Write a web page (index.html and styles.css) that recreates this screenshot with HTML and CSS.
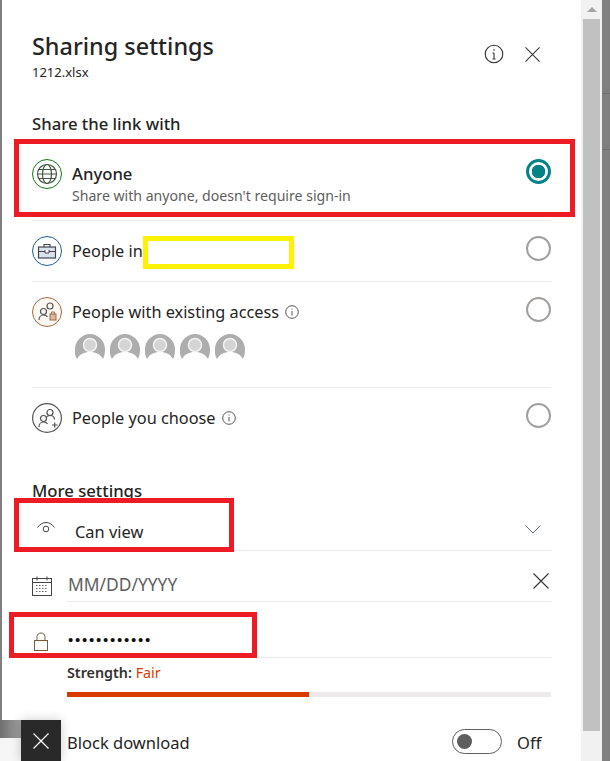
FILE: index.html
```html
<!DOCTYPE html>
<html lang="en">
<head>
    <meta charset="UTF-8">
    <title>Sharing settings</title>
    <link rel="stylesheet" href="styles.css">
</head>
<body>
    <div class="page">
        <div class="dim dim-left"></div>
        <div class="panel">
            <div class="head">
                <div>
                    <h1 class="title">Sharing settings</h1>
                    <p class="file">1212.xlsx</p>
                </div>
                <div class="head-icons">
                    <svg width="20" height="20" viewBox="0 0 20 20" fill="none" stroke="#333" stroke-width="1.1"><circle cx="10" cy="10" r="8.8"/><path d="M10 9v6M8.5 9H10M8.5 15h3"/><circle cx="10" cy="6" r=".8" fill="#333" stroke="none"/></svg>
                    <svg width="15" height="15" viewBox="0 0 16 16" fill="none" stroke="#333" stroke-width="1.1"><path d="M.5.5l15 15M15.5.5l-15 15"/></svg>
                </div>
            </div>
            <h2 class="section-title">Share the link with</h2>

            <div class="option option-first">
                <svg class="option-icon" width="30" height="30" viewBox="0 0 30 30" fill="none" stroke="#107c10"><circle cx="15" cy="15" r="14.5"/><g stroke="#3f5a3f" stroke-width="1.2"><circle cx="15" cy="15" r="9.500"/><ellipse cx="15" cy="15" rx="4.500" ry="9.500"/><path d="M5.500 15h19M7 10.500h16M7 19.500h16"/></g></svg>
                <div class="option-text">
                    <div class="option-name strong">Anyone</div>
                    <div class="option-note">Share with anyone, doesn't require sign-in</div>
                </div>
                <span class="radio radio-on"></span>
            </div>

            <div class="option option-short">
                <svg class="option-icon" width="30" height="30" viewBox="0 0 30 30" fill="none" stroke="#1d5f94"><circle cx="15" cy="15" r="14.500"/><path d="M12 11V8.500h6V11" stroke="#445" stroke-width="1.200"/><rect x="6.500" y="11" width="17" height="11" fill="#d8e3ee" stroke="#445" stroke-width="1.200"/><path d="M6.500 15.500h17" stroke="#445"/><path d="M13 14v3h4v-3" fill="#fff" stroke="#445"/></svg>
                <div class="option-text">
                    <div class="option-name">People in</div>
                </div>
                <span class="radio"></span>
            </div>

            <div class="option option-tall">
                <svg class="option-icon" width="30" height="30" viewBox="0 0 30 30" fill="none" stroke="#a5663f"><circle cx="15" cy="15" r="14.500" fill="#fdf8f4"/><g stroke="#555" stroke-width="1.200"><circle cx="11.500" cy="14.500" r="3"/><path d="M7 23c0-3 2-5 4.500-5s3.500 1 4 2"/><circle cx="18" cy="9" r="3"/></g><rect x="18" y="17" width="6" height="6" fill="#d9b9a3"/><path d="M19.500 17v-2h3v2"/></svg>
                <div class="option-text">
                    <div class="option-name">People with existing access
                        <svg class="hint" width="14" height="14" viewBox="0 0 14 14" fill="none" stroke="#555"><circle cx="7" cy="7" r="6.300"/><path d="M7 6v4.500"/><circle cx="7" cy="4" r=".6" fill="#555" stroke="none"/></svg>
                    </div>
                    <div class="avatars">
                        <svg width="30" height="28" viewBox="0 0 30 28"><use href="#avatar"/></svg>
                        <svg width="30" height="28" viewBox="0 0 30 28"><use href="#avatar"/></svg>
                        <svg width="30" height="28" viewBox="0 0 30 28"><use href="#avatar"/></svg>
                        <svg width="30" height="28" viewBox="0 0 30 28"><use href="#avatar"/></svg>
                        <svg width="30" height="28" viewBox="0 0 30 28"><use href="#avatar"/></svg>
                    </div>
                </div>
                <span class="radio"></span>
            </div>

            <div class="option option-last">
                <svg class="option-icon" width="30" height="30" viewBox="0 0 30 30" fill="none" stroke="#555" stroke-width="1.200"><circle cx="15" cy="15" r="14.400" fill="#fbfbfb"/><circle cx="11.500" cy="15.500" r="3"/><path d="M7 24c0-3 2-5 4.500-5s3.500 1 4 2"/><circle cx="18" cy="9.500" r="3"/><path d="M14 14.500c1-1.500 2.500-2 4-2 3 0 4.500 2 4.500 4M20 22h5.500M22.700 19.500v5"/></svg>
                <div class="option-text">
                    <div class="option-name">People you choose
                        <svg class="hint" width="14" height="14" viewBox="0 0 14 14" fill="none" stroke="#555"><circle cx="7" cy="7" r="6.300"/><path d="M7 6v4.500"/><circle cx="7" cy="4" r=".6" fill="#555" stroke="none"/></svg>
                    </div>
                </div>
                <span class="radio"></span>
            </div>

            <h2 class="section-title more">More settings</h2>

            <div class="field field-view">
                <svg class="eye" width="18" height="14" viewBox="0 0 18 14" fill="none" stroke="#444"><path d="M.5 6.500C3 3 6 1.500 9 1.500s6 1.500 8.500 5"/><circle cx="9" cy="8" r="2.800"/></svg>
                <span class="view-label">Can view</span>
                <svg class="chevron" width="16" height="9" viewBox="0 0 16 9" fill="none" stroke="#5c6f8a"><path d="M.5.500L8 8l7.500-7.500"/></svg>
            </div>

            <div class="indent-row date-row">
                <svg class="side-icon" width="20" height="20" viewBox="0 0 20 20" fill="none" stroke="#444"><rect x=".5" y="2.500" width="19" height="17"/><path d="M.5 6.500h19M5 .5v4M15 .5v4" /><path d="M4 9.500h12M4 12.500h12M4 15.500h12" stroke-dasharray="1.500 1.500" stroke="#667"/></svg>
                <div class="indent-main">
                    <span class="date-text">MM/DD/YYYY</span>
                    <svg width="16" height="16" viewBox="0 0 16 16" fill="none" stroke="#333" stroke-width="1.1"><path d="M.5.500l15 15M15.500.500l-15 15"/></svg>
                </div>
            </div>

            <div class="indent-row pass-row">
                <svg class="side-icon lock" width="14" height="19" viewBox="0 0 14 19" fill="none" stroke="#7d5b3a"><path d="M3 8V4.500C3 2.500 4.800 1 7 1s4 1.500 4 3.500V8"/><rect x=".5" y="8.500" width="13" height="10" fill="#fff"/></svg>
                <div class="indent-main">
                    <span class="pass-dots">••••••••••••</span>
                </div>
            </div>

            <div class="strength">
                <div class="strength-text"><b>Strength:</b> <span class="fair">Fair</span></div>
                <div class="bar"><div class="bar-fill" style="width: 50%"></div></div>
            </div>

            <div class="block-row">
                <span>Block download</span>
                <span class="toggle"></span>
                <span class="off">Off</span>
            </div>
        </div>
        <div class="scrollbar">
            <div class="arrow"></div>
            <div class="thumb"></div>
        </div>
        <div class="dim dim-right"></div>
    </div>

    <!-- annotations on top of the screenshot -->
    <div class="mark mark-anyone"></div>
    <div class="mark mark-view"></div>
    <div class="mark mark-pass"></div>
    <div class="mark-yellow"></div>

    <div class="strip"></div>
    <div class="close-box">
        <svg width="16" height="16" viewBox="0 0 16 16" fill="none" stroke="#fff" stroke-width="1.300"><path d="M.5.500l15 15M15.500.500l-15 15"/></svg>
    </div>

    <svg width="0" height="0" class="defs">
        <defs>
            <g id="avatar">
                <path d="M2 25C-1 20 0 16 0 15 0 7 7 0 15 0s15 7 15 15c0 2 0 6-2 10-3-5-7-7-13-7S5 20 2 25z" fill="#adadad"/>
                <circle cx="15" cy="11" r="6.500" fill="#d4d4d4" stroke="#f2f2f2" stroke-width="1.500"/>
            </g>
        </defs>
    </svg>
</body>
</html>
```

FILE: styles.css
```css
* {
    box-sizing: border-box;
}
html, body {
    margin: 0;
    height: 100%;
    overflow: hidden;
}
body {
    font-family: "Noto Sans", "Open Sans", sans-serif;
    color: #252423;
    background-color: #fff;
}
.page {
    display: flex;
    height: 761px;
}
.dim {
    background-color: #7f7f7f;
}
.dim-left {
    width: 2px;
}
.dim-right {
    width: 8px;
    background-image: linear-gradient(#7f7f7f 93px, #727272 93px, #727272 94px, #7f7f7f 94px, #7f7f7f 149px, #727272 149px, #727272 150px, #7f7f7f 150px);
}
.panel {
    width: 579px;
    padding: 0 30px;
    background-color: #fff;
}

/* header */
.head {
    display: flex;
    justify-content: space-between;
    height: 112px;
    padding-top: 29px;
}
.title {
    margin: 0;
    font-size: 23.400px;
    line-height: 34px;
    font-weight: 500;
}
.file {
    margin: 0;
    font-size: 13px;
    line-height: 18px;
}
.head-icons {
    display: flex;
    gap: 21px;
    align-items: flex-start;
    padding: 18px 11px 0 0;
}
.head-icons svg:first-child {
    margin-top: -3px;
}
.section-title {
    margin: 0;
    height: 36px;
    font-size: 16.700px;
    line-height: 23px;
    font-weight: 500;
}
.section-title.more {
    height: 25px;
    margin-top: 23px;
}

/* options */
.option {
    display: flex;
    border-bottom: 1px solid #edebe9;
}
.option-first {
    height: 73px;
    padding-top: 11px;
}
.option-short {
    height: 61px;
    padding-top: 15px;
}
.option-tall {
    height: 106px;
    padding-top: 15px;
}
.option-last {
    height: 68px;
    padding-top: 15px;
    border-bottom: 0;
}
.option-icon {
    flex: none;
}
.option-text {
    flex: 1;
    padding-left: 10px;
}
.option-name {
    font-size: 16.300px;
    line-height: 30px;
}
.strong {
    font-size: 16.700px;
    font-weight: 500;
}
.option-note {
    margin-top: -3px;
    font-size: 14.100px;
    line-height: 20px;
    color: #605e5c;
}
.hint {
    vertical-align: -1px;
    margin-left: 2px;
}
.avatars {
    display: flex;
    gap: 5px;
    margin: 7px 0 0 3px;
}
.radio {
    flex: none;
    width: 25px;
    height: 25px;
    border: 2px solid #a19f9d;
    border-radius: 50%;
}
.radio-on {
    border: 3px solid #038387;
    background: radial-gradient(circle, #038387 6.500px, #fff 7px);
}

/* more settings */
.field-view {
    display: flex;
    align-items: center;
    height: 47px;
    border-bottom: 1px solid #edebe9;
}
.eye {
    margin: 2px 0 0 5px;
}
.view-label {
    flex: 1;
    margin-left: 20px;
    padding-top: 8px;
    font-size: 16.400px;
}
.chevron {
    margin: 5px 10px 0 0;
}
.indent-row {
    display: flex;
    align-items: center;
}
.side-icon {
    flex: none;
}
.indent-main {
    flex: 1;
    display: flex;
    align-items: center;
    justify-content: space-between;
    border-bottom: 1px solid #edebe9;
}
.date-row {
    height: 51px;
}
.date-row .side-icon {
    margin: 19px 15px 0 0;
}
.date-row .indent-main {
    height: 51px;
    padding-right: 2px;
}
.date-row .indent-main svg {
    margin-top: 10px;
}
.date-text {
    margin: 16px 0 0 1px;
    font-size: 17.400px;
    color: #605e5c;
}
.pass-row {
    height: 56px;
}
.pass-row .side-icon {
    margin: 23px 19px 0 2px;
}
.pass-row .indent-main {
    height: 56px;
}
.pass-dots {
    margin: 20px 0 0 1px;
    font-size: 15px;
    letter-spacing: 1.750px;
    color: #111;
    font-family: "Liberation Sans", sans-serif;
}
.strength {
    margin-left: 35px;
    padding-top: 6px;
}
.strength-text {
    font-size: 14.300px;
    line-height: 18px;
    color: #323130;
}
.strength-text b {
    font-weight: 600;
}
.fair {
    color: #d83b01;
}
.bar {
    height: 5px;
    margin-top: 10px;
    background-color: #edebe9;
}
.bar-fill {
    height: 5px;
    background-color: #d83b01;
}
.block-row {
    display: flex;
    align-items: center;
    height: 26px;
    margin: 32px 0 0 35px;
    font-size: 16.500px;
}
.block-row span:first-child {
    flex: 1;
}
.toggle {
    position: relative;
    width: 50px;
    height: 25px;
    margin-top: -2px;
    border: 1px solid #605e5c;
    border-radius: 13px;
}
.toggle::after {
    content: "";
    position: absolute;
    left: 4px;
    top: 4px;
    width: 15px;
    height: 15px;
    border-radius: 50%;
    background-color: #605e5c;
}
.off {
    width: 34px;
    margin-left: 15px;
}

/* scrollbar */
.scrollbar {
    width: 21px;
    padding: 0 2px;
    background-color: #f1f1f1;
}
.arrow {
    height: 19px;
    padding-top: 7px;
}
.arrow::after {
    content: "";
    display: block;
    width: 0;
    margin: 0 auto;
    border: 5px solid transparent;
    border-top: 0;
    border-bottom-color: #a3a3a3;
}
.thumb {
    height: 712px;
    background-color: #c1c1c1;
}

/* annotations */
.mark, .mark-yellow {
    position: absolute;
    border: 5px solid #ed1c24;
}
.mark-anyone {
    left: 14px;
    top: 139px;
    width: 561px;
    height: 78px;
}
.mark-view {
    left: 14px;
    top: 498px;
    width: 220px;
    height: 54px;
}
.mark-pass {
    left: 9px;
    top: 612px;
    width: 248px;
    height: 46px;
}
.mark-yellow {
    left: 143px;
    top: 236px;
    width: 151px;
    height: 33px;
    border-color: #fff200;
}
.strip {
    position: absolute;
    left: 0;
    top: 720px;
    width: 21px;
    height: 41px;
    background: linear-gradient(to right, #6f6f6f, #a0a0a0) no-repeat 0 0 / 100% 18px, #f6f6f6;
}
.close-box {
    position: absolute;
    left: 21px;
    top: 720px;
    width: 40px;
    height: 41px;
    display: flex;
    align-items: center;
    justify-content: center;
    background-color: #292929;
    box-shadow: 0 0 10px rgba(0, 0, 0, .2);
}
.defs {
    position: absolute;
}
```
